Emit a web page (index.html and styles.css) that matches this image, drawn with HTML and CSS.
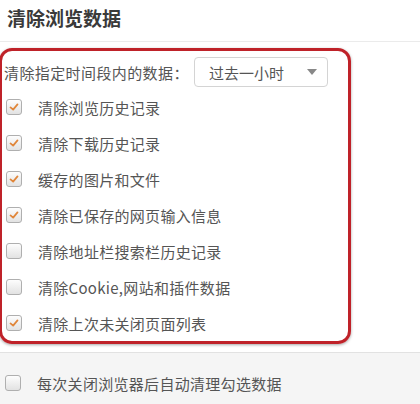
FILE: index.html
```html
<!DOCTYPE html>
<html>
<head>
<meta charset="utf-8">
<link rel="stylesheet" href="styles.css">
</head>
<body>
<div class="header">清除浏览数据</div>
<div class="box">
  <div class="range-row">
    <span class="label">清除指定时间段内的数据：</span>
    <div class="select"><span>过去一小时</span><span class="arrow"></span></div>
  </div>
  <div class="row"><span class="cb checked"><svg viewBox="0 0 16 16"><path d="M4 8.5 L7 11 L12 5" fill="none" stroke="#e0863a" stroke-width="2" stroke-linecap="round" stroke-linejoin="round"/></svg></span><span class="text">清除浏览历史记录</span></div>
  <div class="row"><span class="cb checked"><svg viewBox="0 0 16 16"><path d="M4 8.5 L7 11 L12 5" fill="none" stroke="#e0863a" stroke-width="2" stroke-linecap="round" stroke-linejoin="round"/></svg></span><span class="text">清除下载历史记录</span></div>
  <div class="row"><span class="cb checked"><svg viewBox="0 0 16 16"><path d="M4 8.5 L7 11 L12 5" fill="none" stroke="#e0863a" stroke-width="2" stroke-linecap="round" stroke-linejoin="round"/></svg></span><span class="text">缓存的图片和文件</span></div>
  <div class="row"><span class="cb checked"><svg viewBox="0 0 16 16"><path d="M4 8.5 L7 11 L12 5" fill="none" stroke="#e0863a" stroke-width="2" stroke-linecap="round" stroke-linejoin="round"/></svg></span><span class="text">清除已保存的网页输入信息</span></div>
  <div class="row"><span class="cb"></span><span class="text">清除地址栏搜索栏历史记录</span></div>
  <div class="row"><span class="cb"></span><span class="text">清除Cookie,网站和插件数据</span></div>
  <div class="row"><span class="cb checked"><svg viewBox="0 0 16 16"><path d="M4 8.5 L7 11 L12 5" fill="none" stroke="#e0863a" stroke-width="2" stroke-linecap="round" stroke-linejoin="round"/></svg></span><span class="text">清除上次未关闭页面列表</span></div>
</div>
<div class="footer">
  <div class="row"><span class="cb"></span><span class="text">每次关闭浏览器后自动清理勾选数据</span></div>
</div>
</body>
</html>
```
FILE: styles.css
```css
* { box-sizing: border-box; }
html, body { margin: 0; padding: 0; background: #fff; }
body {
  width: 420px;
  height: 404px;
  overflow: hidden;
  font-family: "Noto Sans CJK SC", "Noto Sans", sans-serif;
  color: #555;
}
.header {
  height: 42px;
  padding: 5px 0 0 7px;
  font-size: 19px;
  font-weight: 700;
  color: #3a3a3a;
  border-bottom: 1px solid #ebebeb;
  line-height: 26px;
}
.box {
  margin: 6px 0 0 -1px;
  width: 352px;
  border: 3px solid #bf2229;
  border-radius: 13px;
  box-shadow: 0 1px 3px rgba(0, 0, 0, 0.35);
}
.range-row {
  display: flex;
  align-items: center;
  height: 38px;
  padding: 4px 0 0 2px;
}
.label {
  font-size: 15px;
  width: 190px;
  letter-spacing: 0.4px;
}
.select {
  display: flex;
  align-items: center;
  justify-content: space-between;
  width: 134px;
  height: 30px;
  border: 1px solid #d4d4d4;
  border-radius: 4px;
  padding: 0 10px 0 14px;
  font-size: 15px;
  color: #555;
  background: #fff;
}
.arrow {
  width: 0;
  height: 0;
  border-left: 5px solid transparent;
  border-right: 5px solid transparent;
  border-top: 6px solid #888;
}
.row {
  display: flex;
  align-items: center;
  height: 36px;
  padding-left: 4px;
}
.cb {
  width: 16px;
  height: 16px;
  border: 1px solid #afafaf;
  border-radius: 3px;
  background: linear-gradient(#fdfdfd, #e2e2e2);
  margin-right: 16px;
  flex: none;
  display: flex;
}
.cb svg { width: 14px; height: 14px; }
.text {
  font-size: 15px;
  color: #555;
  letter-spacing: 0.3px;
}
.footer {
  margin-top: 8px;
  border-top: 1px solid #e2e2e2;
  background: #f5f5f5;
  height: 60px;
  padding-top: 12px;
}
.footer .row { padding-left: 5px; }
```
